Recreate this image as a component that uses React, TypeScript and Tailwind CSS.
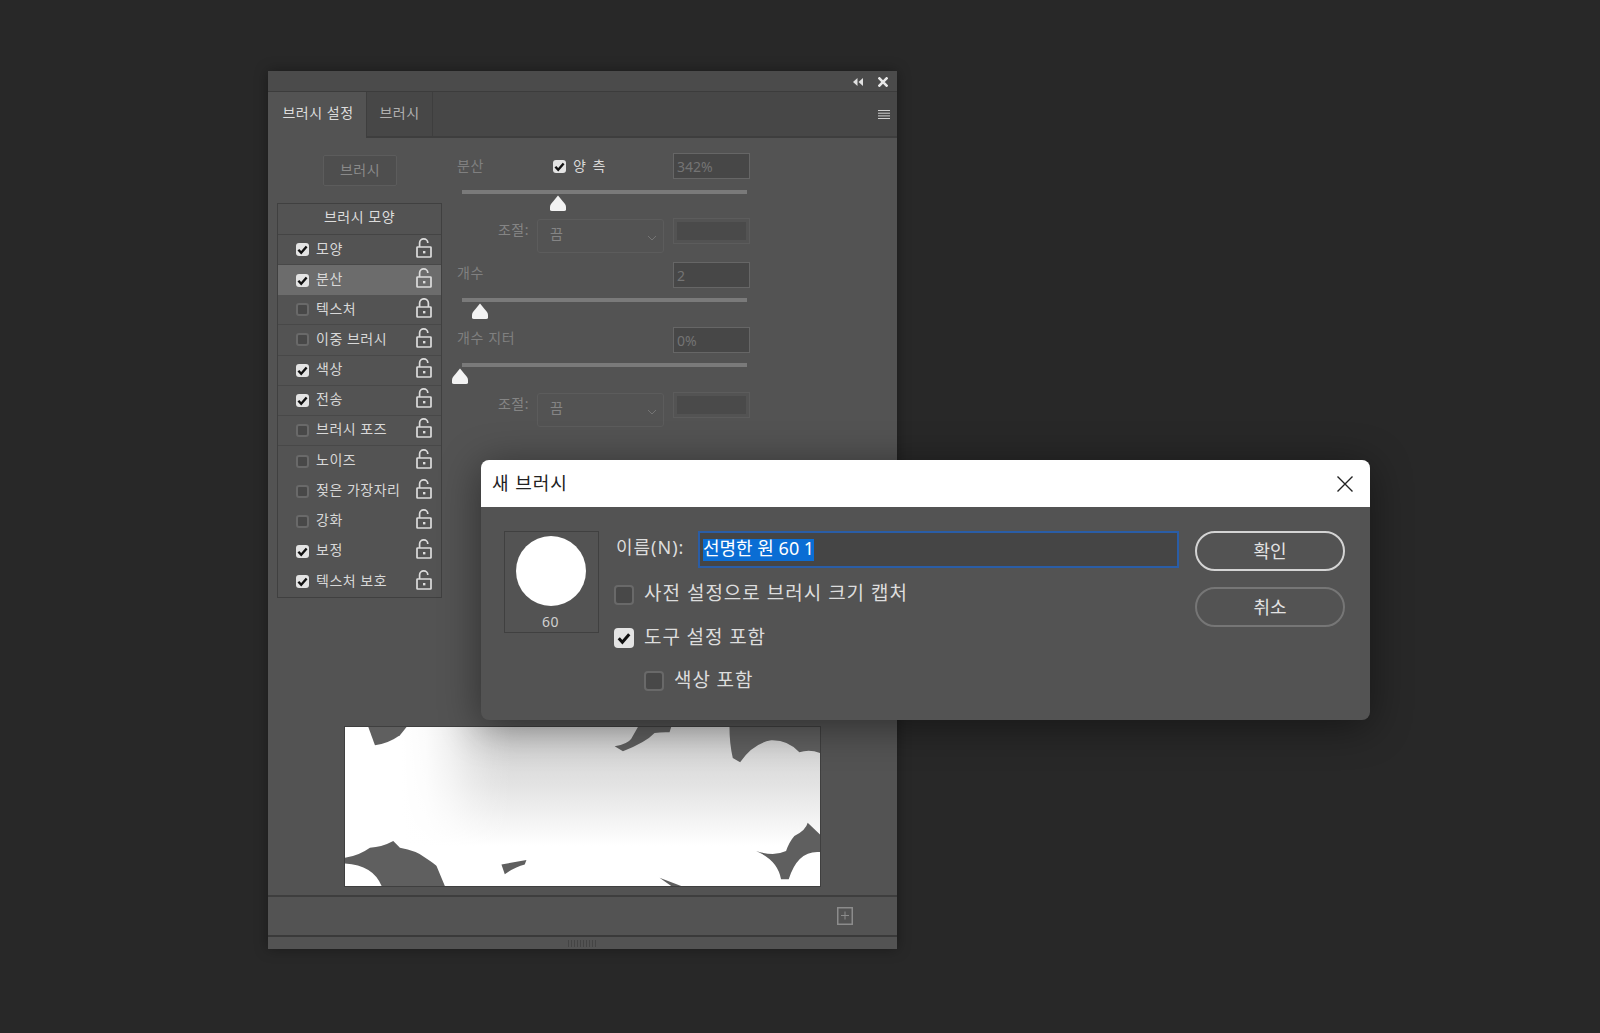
import React from 'react';

const BRUSH_ROWS = [
  { label: '모양', checked: true, line: true },
  { label: '분산', checked: true, active: true },
  { label: '텍스처', checked: false, line: true, closed: true },
  { label: '이중 브러시', checked: false, line: true },
  { label: '색상', checked: true, line: true },
  { label: '전송', checked: true, line: true },
  { label: '브러시 포즈', checked: false, line: true },
  { label: '노이즈', checked: false },
  { label: '젖은 가장자리', checked: false },
  { label: '강화', checked: false },
  { label: '보정', checked: true },
  { label: '텍스처 보호', checked: true },
];

const Check = ({ checked, large }: { checked: boolean; large?: boolean }) => (
  <span
    className={`flex shrink-0 items-center justify-center ${large ? 'h-[20px] w-[20px] rounded-[4px]' : 'h-[13px] w-[13px] rounded-[3px]'} ${
      checked ? 'bg-[#e4e4e4]' : 'border-2 border-[#696969] bg-[#484848]'
    }`}
  >
    {checked && (
      <svg viewBox="0 0 12 12" className={large ? 'h-[14px] w-[14px]' : 'h-[11px] w-[11px]'}>
        <path d="M1.5 6.2 4.6 9.6 10.5 2.8" fill="none" stroke="#111" strokeWidth="2.6" />
      </svg>
    )}
  </span>
);

const Lock = ({ closed }: { closed?: boolean }) => (
  <svg viewBox="0 0 16 20" className="h-[20px] w-[16px] shrink-0" fill="none" stroke="#dcdcdc" strokeWidth="1.7">
    <rect x="1" y="9" width="14" height="10" rx="0.6" />
    <path d={closed ? 'M3.6 9V5.2a4.4 4.4 0 0 1 8.8 0V9' : 'M3.6 9V5a4.1 4.1 0 0 1 8.2 0'} />
    <rect x="7" y="13" width="2.4" height="2.4" fill="#dcdcdc" stroke="none" />
  </svg>
);

const Slider = ({ left }: { left: number }) => (
  <div className="relative ml-[5px] h-[4px] w-[285px] bg-[#7a7a7a]">
    <svg viewBox="0 0 16 17" className="absolute top-[5px] h-[17px] w-[16px]" style={{ left: left - 8 }}>
      <path d="M8 0.5 15 9Q16 10.5 16 12V14.5Q16 16 14 16H2Q0 16 0 14.5V12Q0 10.5 1 9Z" fill="#f2f2f2" />
    </svg>
  </div>
);

const ValueBox = ({ value }: { value?: string }) => (
  <div className="ml-auto flex h-[26px] w-[77px] items-center border border-[#666] bg-[#474747] px-[3px] text-[14px] tracking-normal text-[#747474]">
    {value}
  </div>
);

const EmptyBox = () => (
  <div className="ml-[9px] h-[26px] w-[77px] border border-[#5c5c5c] p-[3px]">
    <div className="h-full w-full bg-[#4a4a4a]" />
  </div>
);

const AdjustRow = () => (
  <div className="flex h-[35px] items-start">
    <span className="mt-[1px] w-[80px] pr-[8px] text-right text-[14px] leading-[22px] tracking-[0.5px] text-[#858585]">조절:</span>
    <div className="mt-[1px] flex h-[34px] w-[127px] items-center justify-between rounded-[3px] border border-[#5c5c5c] pl-[12px] pr-[6px] text-[14px] text-[#858585]">
      <span className="mb-[5px]">끔</span>
      <svg viewBox="0 0 10 6" className="mt-[3px] h-[6px] w-[10px]" fill="none" stroke="#747474" strokeWidth="1">
        <path d="M1 1 5 5 9 1" />
      </svg>
    </div>
    <EmptyBox />
  </div>
);

const BrushPreview = () => (
  <svg viewBox="0 0 1427 478" preserveAspectRatio="none" className="block h-[159px] w-[475px]">
    <defs>
      <linearGradient id="fadeDown" x1="0" y1="0" x2="0" y2="1">
        <stop offset="0" stopColor="#cfcfcf" />
        <stop offset="0.35" stopColor="#e2e2e2" />
        <stop offset="0.75" stopColor="#ffffff" />
      </linearGradient>
      <linearGradient id="fadeRight" x1="0" y1="0" x2="1" y2="0">
        <stop offset="0.12" stopColor="#ffffff" />
        <stop offset="0.17" stopColor="#ffffff" stopOpacity="0.92" />
        <stop offset="0.22" stopColor="#ffffff" stopOpacity="0.65" />
        <stop offset="0.27" stopColor="#ffffff" stopOpacity="0.3" />
        <stop offset="0.31" stopColor="#ffffff" stopOpacity="0.1" />
        <stop offset="0.35" stopColor="#ffffff" stopOpacity="0" />
      </linearGradient>
    </defs>
    <rect width="1427" height="478" fill="url(#fadeDown)" />
    <rect width="1427" height="478" fill="url(#fadeRight)" />
    <g fill="#5f5f5f">
      <path d="M70 0 90 55Q130 50 165 25L185 0Z" />
      <path d="M880 0H980L975 16Q950 15 930 18 905 45 835 73L810 58Q850 50 860 35Z" />
      <path d="M1155 0H1427V78Q1395 66 1365 76 1330 38 1280 40 1225 50 1187 106L1165 93Q1155 50 1155 0Z" />
      <path d="M0 393Q40 388 75 363 110 362 145 343L165 363Q215 372 240 392 275 415 275 418L300 478H110Q85 415 0 410Z" />
      <path d="M470 413 545 400 540 413Q510 420 480 443Z" />
      <path d="M945 453 1010 478H980Z" />
      <path d="M1235 373Q1290 390 1325 373 1335 345 1350 328 1385 310 1390 288L1427 323V376Q1360 370 1333 458H1310Q1300 400 1235 373Z" />
    </g>
  </svg>
);

const BrushPanel = () => (
  <div className="absolute left-[268px] top-[71px] flex h-[878px] w-[629px] flex-col rounded-t-[3px] bg-[#535353] shadow-[0_0_14px_rgba(0,0,0,0.35)]">
    {/* 상단 바 */}
    <div className="flex h-[21px] shrink-0 items-center justify-end border-b border-[#3c3c3c] bg-[#4b4b4b] pr-[9px] pt-[2px]">
      <svg viewBox="0 0 10 8" className="mr-[15px] h-[8px] w-[10px]" fill="#e0e0e0">
        <path d="M4.5 0V8L0 4ZM10 0V8L5.5 4Z" />
      </svg>
      <svg viewBox="0 0 10 10" className="h-[10px] w-[10px]" fill="none" stroke="#e8e8e8" strokeWidth="2.6">
        <path d="M0.5 0.5 9.5 9.5M9.5 0.5 0.5 9.5" />
      </svg>
    </div>

    {/* 탭 */}
    <div className="flex h-[46px] shrink-0 items-stretch border-b-2 border-[#3e3e3e] bg-[#474747] text-[14px] tracking-[0.5px]">
      <div className="-mb-[2px] flex w-[98px] items-center justify-center bg-[#535353] pb-[5px] pl-[2px] text-[#dddddd]">브러시 설정</div>
      <div className="flex w-[67px] items-center justify-center border-x border-[#3e3e3e] pb-[3px] text-[#b0b0b0]">브러시</div>
      <div className="ml-auto flex items-center pr-[7px]">
        <svg viewBox="0 0 12 9" className="h-[9px] w-[12px]" stroke="#cfcfcf" strokeWidth="1">
          <path d="M0 0.5H12M0 3.2H12M0 5.9H12M0 8.5H12" />
        </svg>
      </div>
    </div>

    <div className="flex flex-1 flex-col">
      <div className="flex h-[589px] shrink-0">
        {/* 왼쪽 목록 */}
        <div className="ml-[9px] w-[165px] shrink-0">
          <div className="ml-[46px] mt-[17px] flex h-[31px] w-[74px] items-center justify-center rounded-[2px] border border-[#5c5c5c] bg-[#4e4e4e] pb-[3px] text-[14px] tracking-[0.5px] text-[#8a8a8a]">
            브러시
          </div>
          <div className="mt-[17px] h-[395px] border border-[#404040] pb-[3px]">
            <div className="flex h-[31px] items-center justify-center border-b border-[#444444] pb-[5px] text-[14px] tracking-[0.5px] text-[#dcdcdc]">
              브러시 모양
            </div>
            {BRUSH_ROWS.map((row) => (
              <div
                key={row.label}
                className={`flex h-[30.15px] items-center pl-[18px] pr-[9px] text-[14px] tracking-[0.5px] text-[#d8d8d8] ${
                  row.active ? 'bg-[#6c6c6c]' : ''
                } ${row.line ? 'border-b border-[#484848]' : ''}`}
              >
                <Check checked={row.checked} />
                <span className="mb-[3px] ml-[7px]">{row.label}</span>
                <span className="mb-[4px] ml-auto">
                  <Lock closed={row.closed} />
                </span>
              </div>
            ))}
          </div>
        </div>

        {/* 오른쪽 설정 */}
        <div className="ml-[15px] w-[293px] pt-[15px]">
          <div className="flex h-[26px] items-center text-[14px] tracking-[0.5px]">
            <span className="mb-[2px] w-[96px] text-[#808080]">분산</span>
            <Check checked />
            <span className="mb-[1px] ml-[7px] tracking-[1.5px] text-[#d8d8d8]">양 측</span>
            <ValueBox value="342%" />
          </div>
          <div className="mt-[11px]">
            <Slider left={96} />
          </div>
          <div className="mt-[24px]">
            <AdjustRow />
          </div>
          <div className="mt-[9px] flex h-[26px] items-center text-[14px] tracking-[0.5px] text-[#808080]">
            <span className="mb-[6px]">개수</span>
            <ValueBox value="2" />
          </div>
          <div className="mt-[10px]">
            <Slider left={18} />
          </div>
          <div className="mt-[25px] flex h-[26px] items-center text-[14px] tracking-[0.6px] text-[#808080]">
            <span className="mb-[6px]">개수 지터</span>
            <ValueBox value="0%" />
          </div>
          <div className="mt-[10px]">
            <Slider left={-2} />
          </div>
          <div className="mt-[25px]">
            <AdjustRow />
          </div>
        </div>
      </div>

      <div className="ml-[77px] w-[475px] shrink-0 shadow-[0_0_0_1px_#3f3f3f]">
        <BrushPreview />
      </div>
    </div>

    {/* 하단 바 */}
    <div className="flex h-[42px] shrink-0 items-center justify-end border-y-2 border-t-[#3e3e3e] border-b-[#3a3a3a] pr-[44px]">
      <svg viewBox="0 0 16 18" className="h-[18px] w-[16px]" fill="none" stroke="#8c8c8c">
        <rect x="0.75" y="0.75" width="14.5" height="16.5" strokeWidth="1.5" />
        <path d="M4 8.5H12M8 4.5V12.5" strokeWidth="1" />
      </svg>
    </div>
    <div className="flex h-[12px] shrink-0 items-center justify-center">
      <div className="h-[7px] w-[30px] bg-[repeating-linear-gradient(90deg,#444_0,#444_1px,transparent_1px,transparent_3px)]" />
    </div>
  </div>
);

const NewBrushDialog = () => (
  <div className="absolute left-[481px] top-[460px] flex h-[260px] w-[889px] flex-col overflow-hidden rounded-[8px] bg-[#535353] shadow-[0_6px_40px_rgba(0,0,0,0.45)]">
    <div className="flex h-[47px] shrink-0 items-center justify-between bg-white pl-[11px] pr-[17px] text-[18px] tracking-[1px] text-[#222222]">
      <span className="mb-[1px]">새 브러시</span>
      <svg viewBox="0 0 16 16" className="h-[16px] w-[16px]" fill="none" stroke="#222" strokeWidth="1.4">
        <path d="M0.5 0.5 15.5 15.5M15.5 0.5 0.5 15.5" />
      </svg>
    </div>
    <div className="flex flex-1 items-start pl-[23px] pt-[24px]">
      <div className="flex h-[102px] w-[95px] shrink-0 flex-col items-center border border-[#404040] pr-[2px] pt-[4px]">
        <div className="h-[72px] w-[70px] rounded-full bg-white" />
        <span className="mt-[6px] text-[14px] leading-[20px] tracking-[0.5px] text-[#d0d0d0]">60</span>
      </div>
      <div className="ml-[15px] w-[565px] shrink-0 text-[#dddddd]">
        <div className="flex h-[37px] items-center">
          <span className="mb-[4px] w-[84px] pl-[2px] text-[18px] tracking-[1px]">이름(N):</span>
          <div className="flex h-[37px] flex-1 items-center border-2 border-[#2a5da6] bg-[#454545] pl-[3px]">
            <span className="flex h-[22px] w-[111px] items-center whitespace-nowrap bg-[#0a6dd4] pb-[3px] text-[18px] text-white">선명한 원 60 1</span>
          </div>
        </div>
        <div className="mt-[17px] flex h-[20px] items-center gap-[10px] text-[19px] tracking-[1px]">
          <Check checked={false} large />
          <span className="mb-[4px] leading-[20px]">사전 설정으로 브러시 크기 캡처</span>
        </div>
        <div className="mt-[23px] flex h-[20px] items-center gap-[10px] text-[19px] tracking-[0.9px]">
          <Check checked large />
          <span className="mb-[3px] leading-[20px]">도구 설정 포함</span>
        </div>
        <div className="ml-[30px] mt-[23px] flex h-[20px] items-center gap-[10px] text-[19px] tracking-[0.9px]">
          <Check checked={false} large />
          <span className="mb-[2px] leading-[20px]">색상 포함</span>
        </div>
      </div>
      <div className="ml-[16px] flex w-[150px] shrink-0 flex-col gap-[16px] text-[18px] text-[#e2e2e2]">
        <div className="flex h-[40px] items-center justify-center rounded-full border-2 border-[#d4d4d4]">확인</div>
        <div className="flex h-[40px] items-center justify-center rounded-full border-2 border-[#767676]">취소</div>
      </div>
    </div>
  </div>
);

export default function App() {
  return (
    <div className="relative h-[1033px] w-full overflow-hidden bg-[#282828] font-['Noto_Sans','Noto_Sans_CJK_KR',sans-serif]">
      <BrushPanel />
      <NewBrushDialog />
    </div>
  );
}
